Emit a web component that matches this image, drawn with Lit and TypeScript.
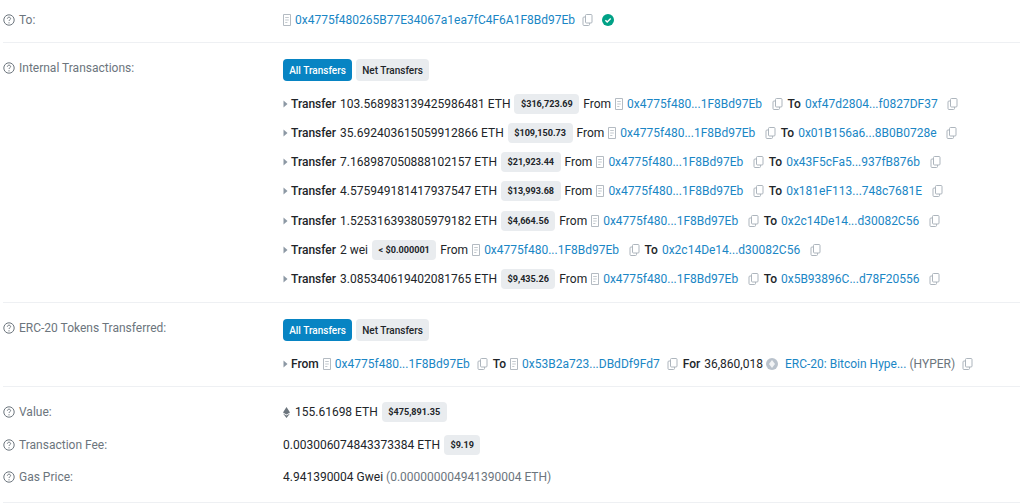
import { LitElement, html, css } from "lit";
import { customElement } from "lit/decorators.js";

const q = html`<svg class="q" viewBox="0 0 12 12"><circle cx="6" cy="6" r="5.200" fill="none" stroke="#6c757d" stroke-width="1"/><path d="M4.400 4.700c0-.9.7-1.500 1.600-1.500s1.600.6 1.600 1.400c0 1.200-1.600 1.200-1.600 2.400" fill="none" stroke="#6c757d" stroke-width="1"/><circle cx="6" cy="8.800" r=".65" fill="#6c757d"/></svg>`;
const doc = html`<svg class="doc" viewBox="0 0 8 12"><path d="M.5.500h7v11h-7z" fill="#fff" stroke="#b4bbc2" stroke-width="1"/><path d="M2.200 3.500h3.600M2.200 6h3.600M2.200 8.500h2.200" stroke="#b4bbc2" stroke-width=".8"/></svg>`;
const copy = (wide = false) => html`<svg class="copy ${wide ? "wide" : ""}" viewBox="0 0 11 12"><path d="M3.500 1.500a1 1 0 0 1 1-1h4.500a1 1 0 0 1 1 1v6.500a1 1 0 0 1-1 1H4.500a1 1 0 0 1-1-1z" fill="none" stroke="#adb5bd" stroke-width="1"/><path d="M3.500 3H2a1 1 0 0 0-1 1v6.500a1 1 0 0 0 1 1h4.500a1 1 0 0 0 1-1V9" fill="none" stroke="#adb5bd" stroke-width="1"/></svg>`;
const arrow = html`<svg class="arrow" viewBox="0 0 5 8"><path d="M.5.500 4.500 4 .5 7.500z" fill="#8c98a4"/></svg>`;

const transfers = [
  ["103.568983139425986481 ETH", "$316,723.69", "0xf47d2804...f0827DF37"],
  ["35.692403615059912866 ETH", "$109,150.73", "0x01B156a6...8B0B0728e"],
  ["7.168987050888102157 ETH", "$21,923.44", "0x43F5cFa5...937fB876b"],
  ["4.575949181417937547 ETH", "$13,993.68", "0x181eF113...748c7681E"],
  ["1.525316393805979182 ETH", "$4,664.56", "0x2c14De14...d30082C56"],
  ["2 wei", "< $0.000001", "0x2c14De14...d30082C56"],
  ["3.085340619402081765 ETH", "$9,435.26", "0x5B93896C...d78F20556"],
];

@customElement("app-root")
export class AppRoot extends LitElement {
  static styles = css`
    :host { display: block; width: 1024px; height: 503px; overflow: hidden; background: #fff; font: 12px Roboto, sans-serif; color: #212529; }
    .sec { display: grid; grid-template-columns: 280px 1fr; margin: 0 4px 0 3px; border-bottom: 1px solid #eef0f3; box-sizing: border-box; }
    .s1 { height: 43px; padding-top: 12px; }
    .s2 { height: 260px; padding-top: 16px; }
    .s3 { height: 84px; padding-top: 16px; }
    .s4 { height: 116px; padding-top: 17px; }
    .label { display: flex; align-items: center; gap: 4px; color: #6c757d; height: 16px; }
    .s2 .label, .s3 .label { margin-top: 1px; }
    .q { width: 12px; height: 12px; flex: none; }
    .line { display: flex; align-items: center; height: 16px; white-space: nowrap; }
    .doc { width: 8px; height: 12px; margin: 0 4px 0 0; flex: none; }
    .copy { width: 11px; height: 12px; margin: 0 5px 0 7px; flex: none; }
    .copy.wide { margin-left: 9.500px; }
    a { color: #1a86c5; }
    b { font-weight: 500; }
    .arrow { width: 5px; height: 8px; margin-right: 3px; flex: none; }
    .m { margin-right: 4px; }
    .btns { display: flex; gap: 4px; margin-bottom: 14.500px; }
    .btn { height: 22px; box-sizing: border-box; padding: 0 6.200px; border-radius: 4px; background: #e9ecef; color: #212529; font-size: 10px; font-weight: 500; display: flex; align-items: center; }
    .btn.on { background: #0784c3; color: #fff; }
    .pill { display: inline-flex; align-items: center; height: 20px; padding: 0 6.500px; margin: 0 4px; background: #e9ecef; border-radius: 4px; font-size: 9.100px; font-weight: 700; color: #212529; }
    .rows { display: flex; flex-direction: column; gap: 13.300px; }
    .ok { width: 12px; height: 12px; margin-left: 4px; flex: none; }
    .gray { color: #6c757d; }
    .token { width: 12px; height: 12px; margin: 0 7px 0 3px; flex: none; }
    .eth { width: 7px; height: 11px; margin-right: 5px; flex: none; }
    .stack, .labels { display: flex; flex-direction: column; gap: 16.500px; }
  `;

  render() {
    return html`
      <div class="sec s1">
        <div class="label">${q}To:</div>
        <div class="line">${doc}<a>0x4775f480265B77E34067a1ea7fC4F6A1F8Bd97Eb</a>${copy()}
          <svg class="ok" viewBox="0 0 12 12"><circle cx="6" cy="6" r="6" fill="#00a186"/><path d="M3.400 6.200 5.200 8l3.500-3.500" fill="none" stroke="#fff" stroke-width="1.400"/></svg>
        </div>
      </div>
      <div class="sec s2">
        <div class="label">${q}Internal Transactions:</div>
        <div>
          <div class="btns"><div class="btn on">All Transfers</div><div class="btn">Net Transfers</div></div>
          <div class="rows">
            ${transfers.map(([amt, usd, to]) => html`
              <div class="line">${arrow}<b class="m">Transfer</b>${amt}<span class="pill">${usd}</span><span class="m">From</span>${doc}<a>0x4775f480...1F8Bd97Eb</a>${copy(true)}<b class="m">To</b><a>${to}</a>${copy(true)}</div>
            `)}
          </div>
        </div>
      </div>
      <div class="sec s3">
        <div class="label">${q}ERC-20 Tokens Transferred:</div>
        <div>
          <div class="btns"><div class="btn on">All Transfers</div><div class="btn">Net Transfers</div></div>
          <div class="line">${arrow}<b class="m">From</b>${doc}<a>0x4775f480...1F8Bd97Eb</a>${copy()}<b class="m">To</b>${doc}<a>0x53B2a723...DBdDf9Fd7</a>${copy()}<b class="m">For</b>36,860,018
            <svg class="token" viewBox="0 0 12 12"><circle cx="6" cy="6" r="6" fill="#b9c2cc"/><path d="M6 2 9 6 6 10 3 6z" fill="#fff" opacity=".8"/></svg>
            <a>ERC-20: Bitcoin Hype...</a>&nbsp;<span class="gray">(HYPER)</span>${copy()}</div>
        </div>
      </div>
      <div class="sec s4">
        <div class="labels">
          <div class="label">${q}Value:</div>
          <div class="label">${q}Transaction Fee:</div>
          <div class="label">${q}Gas Price:</div>
        </div>
        <div class="stack">
          <div class="line"><svg class="eth" viewBox="0 0 7 11"><path d="M3.500 0 7 5.500 3.500 7.500 0 5.500zM0 6.400l3.500 2 3.500-2L3.500 11z" fill="#6c757d"/></svg>155.61698 ETH<span class="pill">$475,891.35</span></div>
          <div class="line">0.003006074843373384 ETH<span class="pill">$9.19</span></div>
          <div class="line">4.941390004 Gwei&nbsp;<span class="gray">(0.000000004941390004 ETH)</span></div>
        </div>
      </div>
    `;
  }
}
